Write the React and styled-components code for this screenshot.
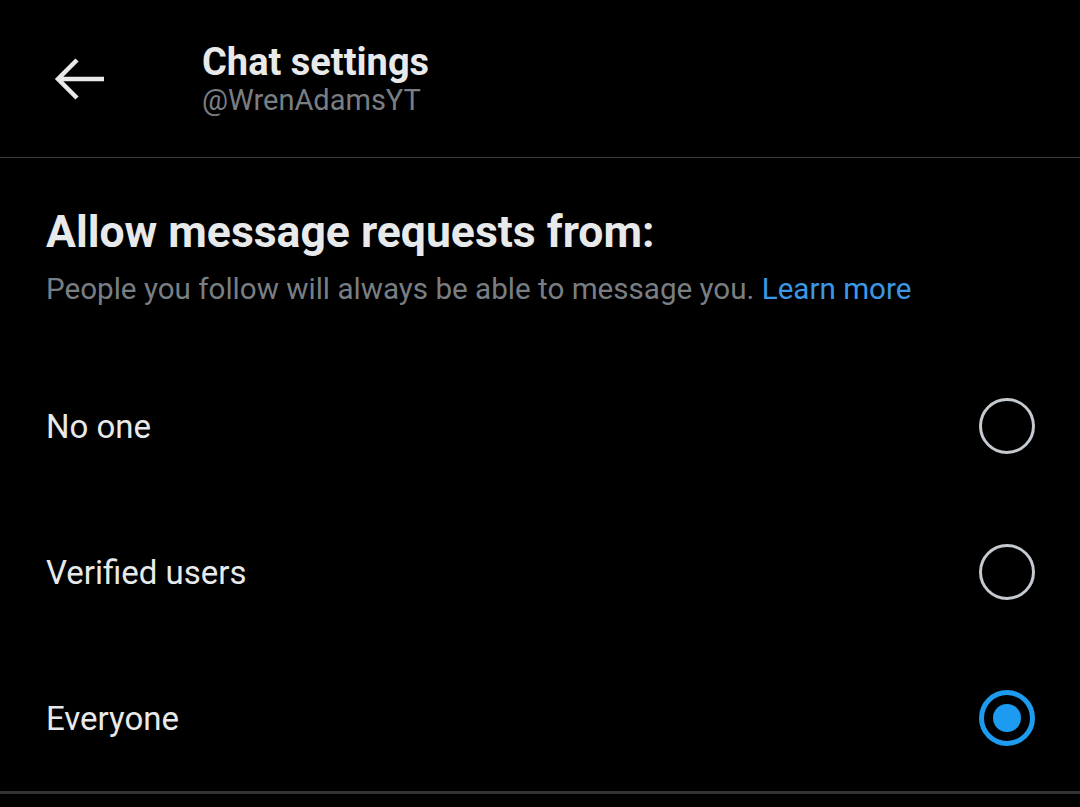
import styled, { createGlobalStyle } from "styled-components";

const GlobalStyle = createGlobalStyle`
  html, body {
    margin: 0;
    padding: 0;
    background: #000;
  }
  body {
    font-family: Roboto, "Noto Sans", sans-serif;
    -webkit-font-smoothing: antialiased;
  }
`;

const options = [
  { label: "No one", selected: false },
  { label: "Verified users", selected: false },
  { label: "Everyone", selected: true },
];

const Page = styled.div`
  width: 1080px;
  height: 807px;
  background: #000;
  color: #e7e9ea;
  overflow: hidden;
`;

const Header = styled.header`
  height: 158px;
  display: flex;
  align-items: flex-start;
  border-bottom: 1px solid #3b3b3b;
  box-sizing: border-box;
`;

const BackButton = styled.button`
  width: 160px;
  height: 158px;
  display: flex;
  align-items: center;
  justify-content: flex-start;
  padding: 0 0 0 54px;
  background: none;
  border: none;
  color: #e7e9ea;
  box-sizing: border-box;
`;

const HeaderText = styled.div`
  display: flex;
  flex-direction: column;
  margin-left: 42px;
  padding-top: 41px;
`;

const Title = styled.h1`
  margin: 0;
  font-size: 38px;
  line-height: 42px;
  font-weight: 700;
  color: #e7e9ea;
`;

const Handle = styled.div`
  font-size: 29px;
  line-height: 34px;
  color: #797e83;
`;

const Section = styled.section`
  padding: 0 46px;
`;

const Heading = styled.h2`
  margin: 48px 0 0;
  font-size: 44.5px;
  line-height: 52px;
  font-weight: 700;
  color: #e7e9ea;
`;

const Subtext = styled.p`
  margin: 13px 0 0;
  font-size: 29.6px;
  line-height: 36px;
  color: #797e83;
`;

const Link = styled.a`
  color: #3a98e4;
  text-decoration: none;
`;

const OptionList = styled.div`
  display: flex;
  flex-direction: column;
  margin-top: 46px;
`;

const OptionRow = styled.label`
  height: 146px;
  display: flex;
  align-items: center;
  justify-content: space-between;
  font-size: 33px;
  color: #e7e9ea;
`;

const Radio = styled.span`
  width: 56px;
  height: 56px;
  border-radius: 50%;
  box-sizing: border-box;
  border: ${(p) => (p.$on ? "5px solid #1d9bf0" : "3px solid #c4cad0")};
  display: flex;
  align-items: center;
  justify-content: center;
  margin-right: -1px;

  &::after {
    content: "";
    display: ${(p) => (p.$on ? "block" : "none")};
    width: 28px;
    height: 28px;
    border-radius: 50%;
    background: #1d9bf0;
  }
`;

const BottomRule = styled.div`
  height: 3px;
  background: #2f3336;
`;

const BackArrow = () => (
  <svg width="52" height="46" viewBox="0 0 52 46" fill="none">
    <path
      d="M50 23H5M23 4L4 23l19 19"
      stroke="currentColor"
      strokeWidth="4.5"
      strokeLinecap="butt"
    />
  </svg>
);

export default function App() {
  return (
    <Page>
      <GlobalStyle />
      <Header>
        <BackButton aria-label="Back">
          <BackArrow />
        </BackButton>
        <HeaderText>
          <Title>Chat settings</Title>
          <Handle>@WrenAdamsYT</Handle>
        </HeaderText>
      </Header>
      <Section>
        <Heading>Allow message requests from:</Heading>
        <Subtext>
          People you follow will always be able to message you.{" "}
          <Link href="#">Learn more</Link>
        </Subtext>
        <OptionList>
          {options.map((opt) => (
            <OptionRow key={opt.label}>
              <span>{opt.label}</span>
              <Radio $on={opt.selected} />
            </OptionRow>
          ))}
        </OptionList>
      </Section>
      <BottomRule />
    </Page>
  );
}
